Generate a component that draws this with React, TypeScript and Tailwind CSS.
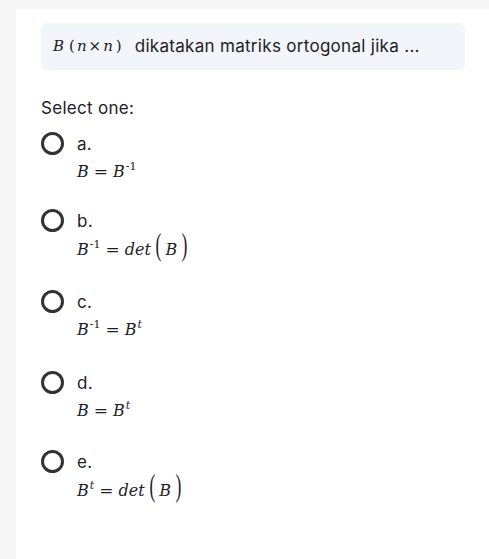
const serif = { fontFamily: '"DejaVu Serif", "Liberation Serif", serif' };

function V({ children }: { children: React.ReactNode }) {
  return <span className="italic">{children}</span>;
}

function Sup({ children, italic }: { children: React.ReactNode; italic?: boolean }) {
  return (
    <span className={`relative -top-[7px] ml-[1px] text-[11px] ${italic ? "italic" : ""}`}>
      {children}
    </span>
  );
}

function Eq() {
  return <span className="mx-[5px] text-[17px]">=</span>;
}

function Paren({ c }: { c: string }) {
  return (
    <span
      className="inline-block origin-center scale-x-[0.55] text-[32px] font-light leading-[18px]"
      style={{ fontFamily: '"Liberation Serif", serif' }}
    >
      {c}
    </span>
  );
}

function BigParen({ children }: { children: React.ReactNode }) {
  return (
    <span className="ml-[2px] inline-flex items-baseline">
      <Paren c="(" />
      <span className="mx-[2px] italic">{children}</span>
      <Paren c=")" />
    </span>
  );
}

type Option = { key: string; math: React.ReactNode };

const options: Option[] = [
  {
    key: "a",
    math: (
      <>
        <V>B</V>
        <Eq />
        <V>B</V>
        <Sup>-1</Sup>
      </>
    ),
  },
  {
    key: "b",
    math: (
      <>
        <V>B</V>
        <Sup>-1</Sup>
        <Eq />
        <V>det</V>
        <BigParen>B</BigParen>
      </>
    ),
  },
  {
    key: "c",
    math: (
      <>
        <V>B</V>
        <Sup>-1</Sup>
        <Eq />
        <V>B</V>
        <Sup italic>t</Sup>
      </>
    ),
  },
  {
    key: "d",
    math: (
      <>
        <V>B</V>
        <Eq />
        <V>B</V>
        <Sup italic>t</Sup>
      </>
    ),
  },
  {
    key: "e",
    math: (
      <>
        <V>B</V>
        <Sup italic>t</Sup>
        <Eq />
        <V>det</V>
        <BigParen>B</BigParen>
      </>
    ),
  },
];

export default function App() {
  return (
    <div
      className="min-h-[559px] bg-[#f7f7f7] pl-[16px] pt-[9px] text-[#1d2125]"
      style={{ fontFamily: 'Inter, "Open Sans", sans-serif' }}
    >
      <div className="min-h-[550px] bg-white pl-[25px] pr-[24px] pt-[14px]">
        {/* QUESTION */}
        <div className="flex h-[47px] items-center rounded-md bg-[#f2f5f9] px-[12px] text-[17px] tracking-[0.3px]">
          <span className="text-[15px] tracking-normal" style={serif}>
            <V>B</V>
            <span className="ml-[5px]">(</span>
            <span className="ml-[2px]">
              <V>n</V>
            </span>
            <span className="mx-[2px]">×</span>
            <V>n</V>
            <span className="ml-[3px]">)</span>
          </span>
          <span className="ml-[13px]">dikatakan matriks ortogonal jika ...</span>
        </div>

        {/* ANSWERS */}
        <div className="mt-[26px] text-[17px] leading-[24px] tracking-[0.3px]">Select one:</div>

        <div className="mt-[12px] flex flex-col">
          {options.map((o, i) => (
            <div key={o.key} className={`flex items-start gap-[13px] ${i === 0 ? "pb-[25px]" : i === 3 ? "pb-[26px]" : "pb-[28px]"}`}>
              <div className="h-[23px] w-[23px] shrink-0 rounded-full border-[3.5px] border-[#333]" />
              <div className="flex flex-col">
                <div className="text-[17px] leading-[25px] tracking-[0.3px]">{o.key}.</div>
                <div
                  className={`mt-[2px] flex items-center text-[16px] ${i === 0 ? "h-[25px]" : "h-[26px]"}`}
                  style={serif}
                >
                  <span className="inline-flex items-baseline">{o.math}</span>
                </div>
              </div>
            </div>
          ))}
        </div>
      </div>
    </div>
  );
}
